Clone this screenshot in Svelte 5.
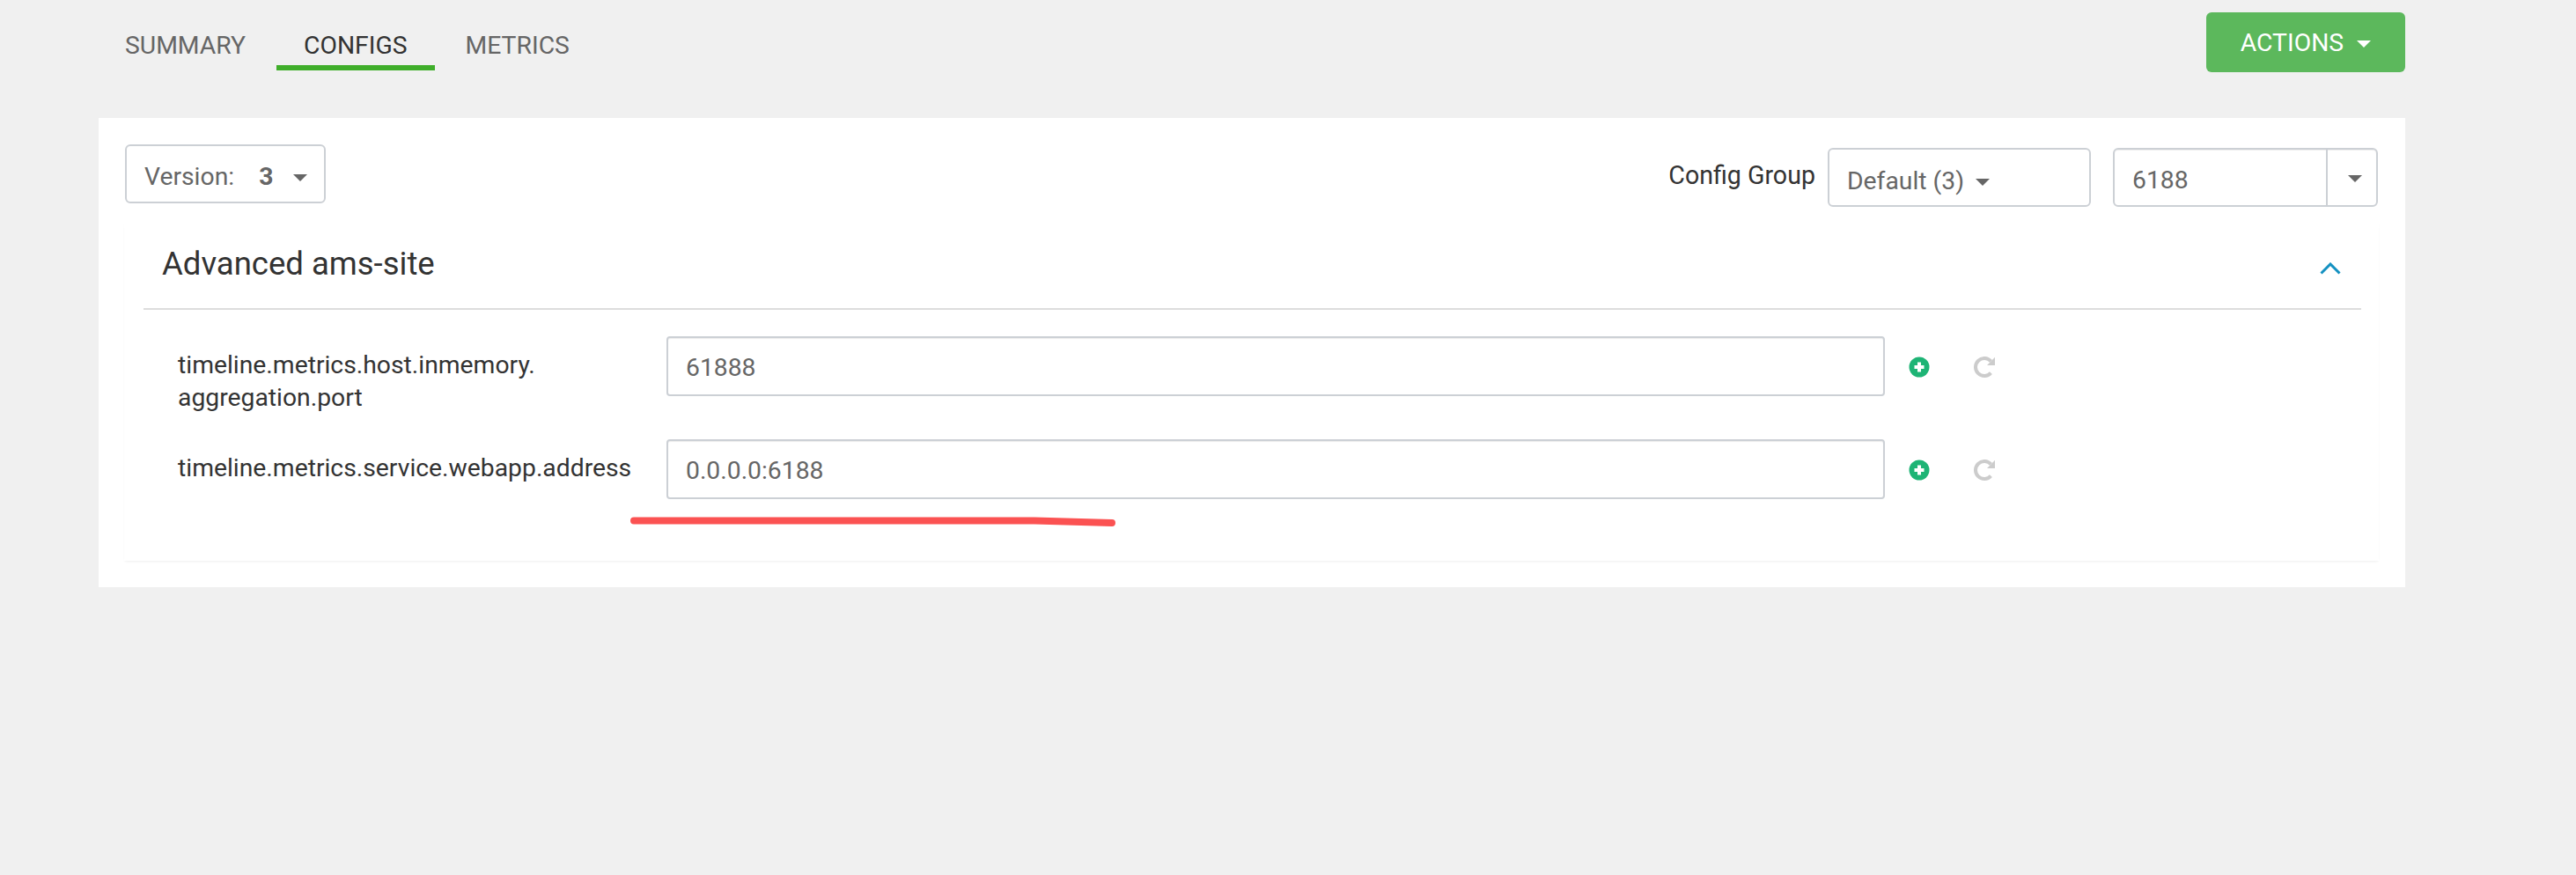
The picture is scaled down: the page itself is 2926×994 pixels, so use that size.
<script>
    const rows = [
        { label: ["timeline.metrics.host.inmemory.", "aggregation.port"], value: "61888" },
        { label: ["timeline.metrics.service.webapp.address"], value: "0.0.0.0:6188" },
    ];
</script>

<div class="page">
    <div class="top">
        <nav class="tabs">
            <span class="tab">SUMMARY</span>
            <span class="tab active">CONFIGS</span>
            <span class="tab">METRICS</span>
        </nav>
        <button class="actions">ACTIONS <i class="caret white"></i></button>
    </div>

    <section class="panel">
        <div class="toolbar">
            <button class="select version">Version: <b>3</b> <i class="caret"></i></button>
            <div class="group-picker">
                <span class="group-label">Config Group</span>
                <button class="select group">Default (3) <i class="caret"></i></button>
                <div class="combo">
                    <span class="combo-value">6188</span>
                    <span class="combo-toggle"><i class="caret"></i></span>
                </div>
            </div>
        </div>

        <div class="config-box">
            <div class="section">
                <div class="section-head">
                    <h2>Advanced ams-site</h2>
                    <svg class="chevron" viewBox="0 0 24 14" width="24" height="14">
                        <path d="M1.5 12.5 12 2l10.5 10.5" fill="none" stroke="#1491c1" stroke-width="3" />
                    </svg>
                </div>
                <div class="rows">
                    {#each rows as row}
                        <div class="row">
                            <div class="label">
                                {#each row.label as line}<div>{line}</div>{/each}
                            </div>
                            <div class="input">{row.value}</div>
                            <svg class="plus" viewBox="0 0 24 24" width="24" height="24">
                                <circle cx="12" cy="12" r="11.5" fill="#1eb475" />
                                <path d="M12 6.5v11M6.5 12h11" stroke="#fff" stroke-width="4" />
                            </svg>
                            <svg class="undo" viewBox="0 0 24 24" width="24" height="24">
                                <path d="M19.4 18.7A10 10 0 1 1 19.5 5.4" fill="none" stroke="#ccc" stroke-width="4" />
                                <path d="M24 .7V10H15z" fill="#ccc" />
                            </svg>
                        </div>
                    {/each}
                </div>
            </div>
        </div>

        <!-- red pen mark over the screenshot -->
        <svg class="scribble" viewBox="0 0 552 14" width="552" height="14">
            <path d="M4 5.5H459L547 8" fill="none" stroke="#fb5252" stroke-width="8" stroke-linecap="round" />
        </svg>
    </section>
</div>

<style>
    :global(body) {
        background: #f0f0f0;
    }

    .page {
        width: 2620px;
        min-height: 994px;
        margin-left: 112px;
        font-family: Roboto, "Liberation Sans", sans-serif;
        font-size: 28.3px;
        color: #333;
    }

    .top {
        height: 134px;
        display: flex;
        justify-content: space-between;
        align-items: flex-start;
    }

    .tabs {
        display: flex;
        gap: 4px;
        margin-top: 31px;
    }

    .tab {
        padding: 0 31px;
        height: 43px;
        line-height: 41px;
        color: #666;
    }

    .tab:first-child {
        padding-left: 30px;
    }

    .tab.active {
        color: #333;
        border-bottom: 6px solid #3fae2a;
    }

    button {
        font: inherit;
    }

    .actions {
        width: 226px;
        height: 68px;
        margin-top: 14px;
        border: none;
        border-radius: 6px;
        background: #5cb85c;
        color: #fff;
        padding: 0;
    }

    .caret {
        display: inline-block;
        width: 0;
        height: 0;
        margin-left: 8px;
        vertical-align: 4px;
        border-left: 8px solid transparent;
        border-right: 8px solid transparent;
        border-top: 8px solid #666;
    }

    .caret.white {
        border-top-color: #fff;
    }

    .panel {
        position: relative;
        width: 2620px;
        height: 533px;
        background: #fff;
    }

    .toolbar {
        display: flex;
        justify-content: space-between;
        padding: 30px 31px 0 30px;
    }

    .select {
        text-align: left;
        background: #fff;
        border: 2px solid #ccd0d5;
        border-radius: 6px;
        color: #666;
        padding: 0 0 0 20px;
    }

    .select .caret {
        margin-left: 6px;
    }

    .version {
        width: 228px;
        height: 67px;
        padding-top: 6px;
    }

    .version b {
        margin-left: 21px;
        margin-right: 10px;
        font-weight: 700;
    }

    .group-picker {
        display: flex;
        align-items: flex-start;
        margin-top: 4px;
    }

    .group-label {
        margin: 14px 14px 0 0;
        font-size: 28.6px;
    }

    .group {
        width: 299px;
        height: 67px;
        padding-top: 8px;
    }

    .combo {
        display: flex;
        width: 301px;
        height: 67px;
        margin-left: 25px;
        box-sizing: border-box;
        border: 2px solid #ccd0d5;
        border-radius: 6px;
        color: #666;
        box-shadow: inset 0 1px 1px rgba(0, 0, 0, 0.075);
    }

    .combo-value {
        flex: 1;
        padding-left: 20px;
        line-height: 70px;
    }

    .combo-toggle {
        width: 57px;
        box-sizing: border-box;
        border-left: 2px solid #ccd0d5;
        padding-left: 23px;
        line-height: 64px;
    }

    .combo-toggle .caret {
        margin-left: 0;
    }

    .config-box {
        height: 384px;
        margin: 18px 30px 0 29px;
        box-shadow: 0 2px 3px -1px rgba(0, 0, 0, 0.07);
    }

    .section {
        margin: 0 20px 0 22px;
    }

    .section-head {
        display: flex;
        justify-content: space-between;
        align-items: center;
        box-sizing: border-box;
        height: 99px;
        padding: 0 23px 4px 21px;
        border-bottom: 2px solid #ddd;
    }

    h2 {
        margin: 0;
        font-size: 36.5px;
        font-weight: 400;
        color: #333;
    }

    .chevron {
        margin-top: 10px;
    }

    .rows {
        padding-top: 30px;
    }

    .row {
        display: flex;
        align-items: flex-start;
        height: 117px;
        margin-left: 39px;
    }

    .label {
        width: 555px;
        line-height: 37px;
        padding-top: 14px;
    }

    .input {
        box-sizing: border-box;
        width: 1384px;
        height: 68px;
        line-height: 67px;
        padding-left: 20px;
        border: 2px solid #ccd0d5;
        border-radius: 4px;
        color: #666;
        box-shadow: inset 0 1px 1px rgba(0, 0, 0, 0.075);
    }

    .plus {
        margin: 23px 0 0 27px;
    }

    .undo {
        margin: 23px 0 0 50px;
    }

    .scribble {
        position: absolute;
        left: 604px;
        top: 452px;
    }
</style>
